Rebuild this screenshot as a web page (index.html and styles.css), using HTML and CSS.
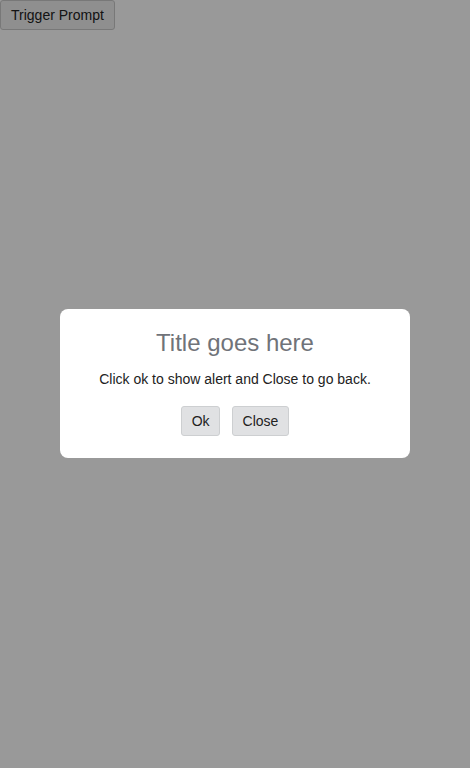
FILE: index.html
```html
<!DOCTYPE html>
<html>
<head>
<meta charset="utf-8">
<link rel="stylesheet" href="styles.css">
</head>
<body>
<button class="trigger">Trigger Prompt</button>
<div class="overlay">
  <div class="modal">
    <h2 class="title">Title goes here</h2>
    <p class="message">Click ok to show alert and Close to go back.</p>
    <div class="actions">
      <button class="btn">Ok</button>
      <button class="btn">Close</button>
    </div>
  </div>
</div>
</body>
</html>
```
FILE: styles.css
```css
html, body {
  margin: 0;
  padding: 0;
  background: #ffffff;
  font-family: "Liberation Sans", Arial, sans-serif;
}
.trigger {
  display: block;
  margin: 0;
  padding: 6px 10px;
  font-family: "Liberation Sans", Arial, sans-serif;
  font-size: 14px;
  line-height: 16px;
  color: #222;
  background: #efefef;
  border: 1px solid #c8c8c8;
  border-radius: 3px;
}
.overlay {
  position: fixed;
  inset: 0;
  background: rgba(0, 0, 0, 0.4);
  display: flex;
  align-items: center;
  justify-content: center;
}
.modal {
  width: 350px;
  box-sizing: border-box;
  background: #fff;
  border-radius: 8px;
  padding: 20px 20px 22px;
  margin-bottom: 1px;
  text-align: center;
}
.title {
  margin: 0 0 14px;
  font-size: 24px;
  line-height: 28px;
  font-weight: normal;
  color: #707379;
}
.message {
  margin: 0 0 19px;
  font-size: 14px;
  line-height: 16px;
  color: #222;
}
.actions {
  display: flex;
  justify-content: center;
  gap: 12px;
}
.btn {
  margin: 0;
  padding: 6px 9.5px;
  font-family: "Liberation Sans", Arial, sans-serif;
  font-size: 14px;
  line-height: 16px;
  color: #222;
  background: #e0e1e3;
  border: 1px solid #cdcfd1;
  border-radius: 3px;
}
```
